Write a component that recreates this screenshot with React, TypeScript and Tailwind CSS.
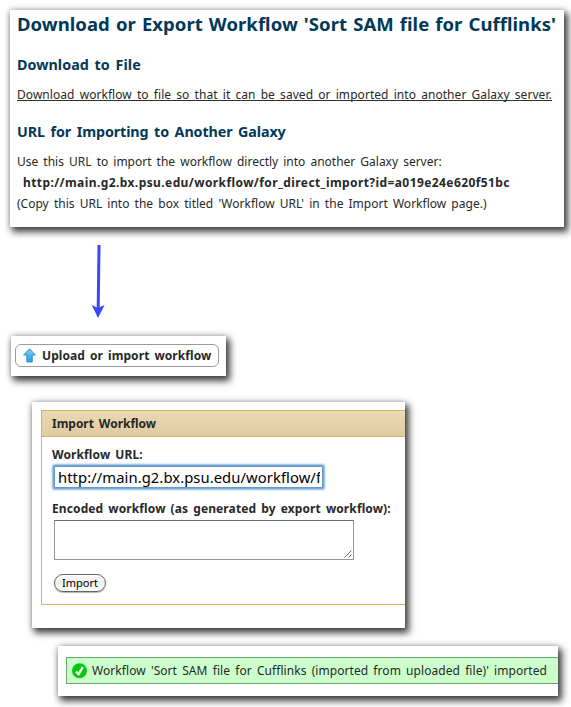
import type { ReactNode } from "react";

const panelShadow =
  "shadow-[3px_4px_7px_1px_rgba(0,0,0,0.72),0_0_6px_rgba(0,0,0,0.25)]";

function Panel({ className, children }: { className: string; children: ReactNode }) {
  return <section className={`bg-white ${panelShadow} ${className}`}>{children}</section>;
}

function DownArrow() {
  return (
    <svg className="ml-[90px] mt-[17px] block" width="16" height="76" viewBox="0 0 16 76">
      <path d="M9 1L8.2 65" stroke="#3b46fb" strokeWidth="3" />
      <path d="M1.8 61L8 64L14.6 61L8 74Z" fill="#3b46fb" />
    </svg>
  );
}

function UploadIcon() {
  return (
    <svg className="block shrink-0" width="14" height="15" viewBox="0 0 14 15">
      <defs>
        <linearGradient id="up" x1="0" y1="0" x2="0" y2="1">
          <stop offset="0" stopColor="#8fcdf2" />
          <stop offset="0.45" stopColor="#5ab5ee" />
          <stop offset="1" stopColor="#18a4f5" />
        </linearGradient>
      </defs>
      <path
        d="M6.5 .8L12.4 7H9.2V14H3.8V7H.6Z"
        fill="url(#up)"
        stroke="#3e8fc6"
        strokeWidth="1"
        strokeLinejoin="round"
      />
    </svg>
  );
}

function CheckIcon() {
  return (
    <svg className="block shrink-0" width="16" height="16" viewBox="0 0 16 16">
      <circle cx="7.5" cy="7.8" r="7.5" fill="#08c80d" />
      <path d="M4 8.6L6.6 11.2L10.8 4.2" fill="none" stroke="#fff" strokeWidth="2.3" />
    </svg>
  );
}

export default function App() {
  return (
    <main className="flex h-[707px] w-[571px] flex-col items-start overflow-hidden whitespace-nowrap bg-white pt-[10px] font-['Noto_Sans','Open_Sans',sans-serif] text-[12px] tracking-[0.05px] text-[#282828] [word-spacing:2px]">
      <Panel className="ml-[10px] h-[217px] w-[554px] shrink-0 pl-[7px]">
        <h1 className="h-[30px] text-[18.5px] font-bold leading-[28px] text-[#023858] [word-spacing:1.2px]">
          Download or Export Workflow 'Sort SAM file for Cufflinks'
        </h1>
        <h2 className="mt-[15px] h-[20px] text-[14.3px] font-bold leading-[20px] text-[#023858]">
          Download to File
        </h2>
        <div className="mt-[10px] h-[18px]">
          <a className="inline-block h-[16px] border-b border-[#303030] leading-[19px]">
            Download workflow to file so that it can be saved or imported into another Galaxy server.
          </a>
        </div>
        <h2 className="mt-[19px] h-[20px] text-[14.3px] font-bold leading-[20px] tracking-[-0.1px] text-[#023858]">
          URL for Importing to Another Galaxy
        </h2>
        <div className="mt-[9px] leading-[21px]">
          <p className="tracking-[-0.01px]">
            Use this URL to import the workflow directly into another Galaxy server:
          </p>
          <p className="pl-[6px] font-bold tracking-[0.41px]">
            http://main.g2.bx.psu.edu/workflow/for_direct_import?id=a019e24e620f51bc
          </p>
          <p className="tracking-[0.01px]">
            (Copy this URL into the box titled 'Workflow URL' in the Import Workflow page.)
          </p>
        </div>
      </Panel>

      <DownArrow />

      <Panel className="ml-[11px] mt-[16px] h-[40px] w-[215px] shrink-0 pl-[4px] pt-[8px]">
        <button className="flex h-[23px] w-[204px] items-center rounded-[6px] border border-[#9b9b9b] pl-[7px] font-bold tracking-[0.08px] [word-spacing:1.8px]">
          <UploadIcon />
          <span className="ml-[5px]">Upload or import workflow</span>
        </button>
      </Panel>

      <Panel className="ml-[32px] mt-[26px] h-[226px] w-[373px] shrink-0 pl-[9px] pt-[8px]">
        <form className="h-[195px] border border-r-0 border-[#d8b365] font-bold tracking-[0.11px] [word-spacing:1.8px]">
          <h3 className="h-[26px] border-b border-[#d8b365] bg-linear-to-b from-[#ebd9b2] to-[#dfcaa3] pl-[10px] leading-[26px] tracking-[-0.02px]">
            Import Workflow
          </h3>
          <div className="pl-[10px] pt-[9px]">
            <label className="block h-[18px] leading-[18px]">Workflow URL:</label>
            <input
              className="ml-[2px] mt-[2px] block h-[22px] w-[269px] rounded-[1px] border border-[#6699c8] bg-white pl-[3px] pr-[2px] text-[14.8px] font-normal tracking-[0.06px] text-black shadow-[0_0_1px_1px_#72a7d6,0_0_2px_2px_#8fbbe2] outline-none"
              defaultValue="http://main.g2.bx.psu.edu/workflow/for_direct_import?id=a019e24e620f51bc"
            />
            <label className="mt-[12px] block h-[18px] leading-[18px]">
              Encoded workflow (as generated by export workflow):
            </label>
            <div className="ml-[2px] mt-[2px] flex h-[40px] w-[300px] items-end justify-end border border-[#969696] border-t-[#6c6c6c] pb-px pr-px">
              <svg width="8" height="8" viewBox="0 0 8 8">
                <path d="M.5 7.5L7.5 .5M4.5 7.5L7.5 4.5" stroke="#555" strokeWidth=".9" />
              </svg>
            </div>
            <button className="ml-[2px] mt-[14px] block h-[18px] w-[52px] rounded-full border border-[#666] bg-linear-to-b from-white via-[#eeeeee] to-white text-[11px] font-normal leading-[16px] tracking-normal text-black shadow-[0_1px_1px_rgba(0,0,0,0.3)]">
              Import
            </button>
          </div>
        </form>
      </Panel>

      <Panel className="ml-[58px] mt-[18px] h-[50px] w-[500px] shrink-0 pl-[8px] pt-[11px]">
        <div className="flex h-[27px] items-center border border-r-0 border-[#66aa66] bg-[#ccffcc] pl-[5px] tracking-[0.06px]">
          <CheckIcon />
          <span className="ml-[4px]">
            Workflow 'Sort SAM file for Cufflinks (imported from uploaded file)' imported
          </span>
        </div>
      </Panel>
    </main>
  );
}
